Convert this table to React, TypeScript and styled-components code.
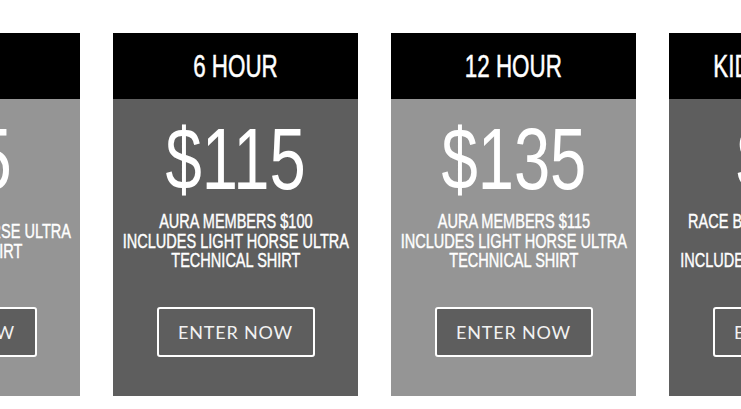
import styled, { createGlobalStyle } from 'styled-components';

interface Plan {
  title: string;
  price: string;
  lines: string[];
  tone: 'light' | 'dark';
}

const plans: Plan[] = [
  {
    title: '3 HOUR',
    price: '$95',
    lines: ['INCLUDES LIGHT HORSE ULTRA', 'TECHNICAL SHIRT'],
    tone: 'light',
  },
  {
    title: '6 HOUR',
    price: '$115',
    lines: ['AURA MEMBERS $100', 'INCLUDES LIGHT HORSE ULTRA', 'TECHNICAL SHIRT'],
    tone: 'dark',
  },
  {
    title: '12 HOUR',
    price: '$135',
    lines: ['AURA MEMBERS $115', 'INCLUDES LIGHT HORSE ULTRA', 'TECHNICAL SHIRT'],
    tone: 'light',
  },
  {
    title: 'KIDS 12 HOUR',
    price: '$55',
    lines: ['RACE BIB & FINISHER MEDAL', '(AGES 8-15)', 'INCLUDES LIGHT HORSE SHIRT'],
    tone: 'dark',
  },
];

const GlobalStyle = createGlobalStyle`
  html, body {
    margin: 0;
    padding: 0;
    background: #fff;
  }
`;

function App() {
  return (
    <>
      <GlobalStyle />
      <Viewport>
        <Track>
          {plans.map((plan) => (
            <Card key={plan.title}>
              <Header>
                <Condensed $scale={0.7}>{plan.title}</Condensed>
              </Header>
              <Body $tone={plan.tone}>
                <Price>
                  <Condensed $scale={0.74}>{plan.price}</Condensed>
                </Price>
                <Details>
                  <Condensed $scale={0.745}>
                    {plan.lines.map((line) => (
                      <Line key={line}>{line}</Line>
                    ))}
                  </Condensed>
                </Details>
                <EnterButton $tone={plan.tone}>ENTER NOW</EnterButton>
              </Body>
            </Card>
          ))}
        </Track>
      </Viewport>
    </>
  );
}

const Viewport = styled.div`
  width: 741px;
  height: 409px;
  overflow: hidden;
  padding-top: 33px;
  box-sizing: border-box;
`;

const Track = styled.div`
  display: flex;
  gap: 33px;
  margin-left: -165px;
`;

const Card = styled.div`
  width: 245px;
  flex-shrink: 0;
  display: flex;
  flex-direction: column;
  color: #fff;
  font-family: 'Liberation Sans', Arial, sans-serif;
`;

// stands in for the tall condensed display face of the original
const Condensed = styled.span<{ $scale: number }>`
  display: inline-block;
  white-space: nowrap;
  transform: scaleX(${({ $scale }) => $scale});
  transform-origin: center;
`;

const Header = styled.div`
  height: 66px;
  display: flex;
  align-items: center;
  justify-content: center;
  background: #000;
  font-size: 32px;
  -webkit-text-stroke: 0.5px #fff;
`;

const Body = styled.div<{ $tone: 'light' | 'dark' }>`
  height: 297px;
  padding-top: 20px;
  box-sizing: border-box;
  display: flex;
  flex-direction: column;
  align-items: center;
  background: ${({ $tone }) => ($tone === 'light' ? '#959595' : '#5e5e5e')};
`;

const Price = styled.div`
  height: 80px;
  font-size: 88px;
  line-height: 80px;
`;

const Details = styled.div`
  height: 83px;
  width: 100%;
  display: flex;
  align-items: center;
  justify-content: center;
  font-size: 19.5px;
  line-height: 20px;
  text-align: center;
  -webkit-text-stroke: 0.4px #fff;
`;

const Line = styled.span`
  display: block;
  height: 19.5px;
  overflow: visible;
`;

const EnterButton = styled.button<{ $tone: 'light' | 'dark' }>`
  margin-top: 25px;
  width: 158px;
  height: 50px;
  border: 2px solid #fff;
  border-radius: 3px;
  background: ${({ $tone }) => ($tone === 'light' ? '#5e5e5e' : 'transparent')};
  color: #f2f2f2;
  font-family: Lato, 'Liberation Sans', sans-serif;
  font-size: 18px;
  letter-spacing: 0.8px;
  white-space: nowrap;
  cursor: pointer;
`;

export default App;
